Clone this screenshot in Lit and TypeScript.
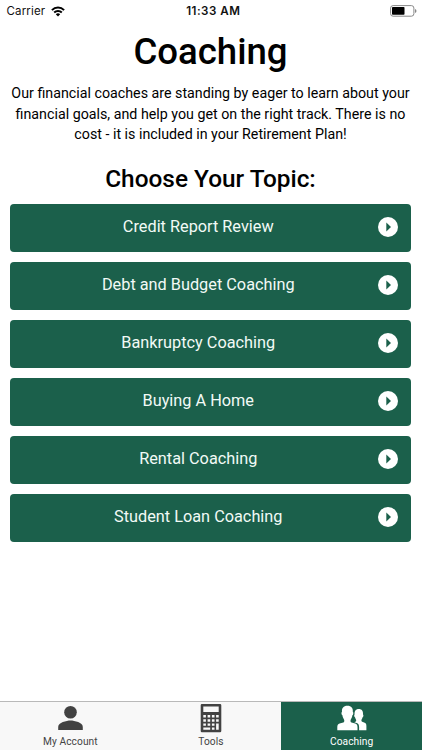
import { LitElement, html, css, svg } from "lit";
import { customElement, property } from "lit/decorators.js";
import { classMap } from "lit/directives/class-map.js";

const TOPICS = [
  "Credit Report Review",
  "Debt and Budget Coaching",
  "Bankruptcy Coaching",
  "Buying A Home",
  "Rental Coaching",
  "Student Loan Coaching",
];

const ICONS = {
  account: svg`<circle cx="15.500" cy="8.300" r="6.300"/><path d="M3.200 26v-3.100c0-4.200 8.200-6.300 12.300-6.300s12.300 2.100 12.300 6.300V26z"/>`,
  tools: svg`<path fill-rule="evenodd" d="M5.900 0h18.200q1.200 0 1.200 1.200v25.900q0 1.200-1.200 1.200H5.900q-1.200 0-1.200-1.200V1.200Q4.700 0 5.900 0zM7.300 2.500v5.500h15.400V2.500zM7.300 11v2.500h2.600V11zM11.600 11v2.500h2.600V11zM15.900 11v2.500h2.600V11zM20.100 11v2.500h2.600V11zM7.300 15.200v2.500h2.600v-2.500zM11.600 15.200v2.500h2.600v-2.500zM15.900 15.200v2.500h2.600v-2.500zM20.100 15.200v2.500h2.600v-2.500zM7.300 19.400v2.400h2.600v-2.400zM11.600 19.400v2.400h2.600v-2.400zM15.900 19.400v2.400h2.600v-2.400zM20.100 19.400v6.400h2.600v-6.400zM7.300 23.500v2.300h6.900v-2.300zM15.900 23.500v2.300h2.600v-2.300z"/>`,
  coaching: svg`<path d="M.3 26.200v-2.900c0-2.400.7-3.200 2.300-3.700l3.700-1.200c.8-.3 1-.8 1-1.700 0-.8-.3-1.300-.7-1.900-.7-1-1.100-2.200-1.200-3.500-1-.3-1.300-3-.4-3.500C4.700 4 6.400 1.700 10.400 1.700s5.700 2.300 5.400 6.100c.9.500.6 3.200-.4 3.500-.1 1.300-.5 2.500-1.200 3.500-.4.600-.7 1.100-.7 1.900 0 .9.200 1.400 1 1.700l3.700 1.200c1.600.5 2.300 1.300 2.300 3.700v2.900z"/><path d="M17.300 18.300l1.100-.5c.6-.3.800-.7.800-1.400 0-.9-.9-1.800-1.200-3.200-.8-.4-1.100-2.300-.4-2.800-.3-3.300 1.100-5.500 4.200-5.500s4.500 2.200 4.200 5.500c.7.500.4 2.400-.4 2.800-.3 1.400-1.200 2.300-1.200 3.200 0 .7.200 1.100.8 1.400l2.500 1c1.200.5 1.700 1.300 1.700 3.200v4.200h-7.300v-3c0-2.600-.9-3.500-2.500-4.100z"/>`,
};

@customElement("status-bar")
class StatusBar extends LitElement {
  static styles = css`
    :host { display: grid; grid-template-columns: 1fr auto 1fr; align-items: center; height: 22px; padding: 0 5px 0 6.500px; font: 11.500px/22px Inter, sans-serif; color: #111; }
    .left { display: flex; align-items: center; gap: 6px; letter-spacing: .15px; }
    .time { font-weight: 600; font-size: 11.600px; letter-spacing: .48px; padding-left: 3px; }
    .battery { justify-self: end; }
    svg { display: block; }
  `;
  render() {
    return html`
      <div class="left"><span>Carrier</span>
        <svg width="14" height="11" viewBox="0 0 14 11" fill="none" stroke="#000" stroke-width="2">
          <path d="M.9 4.100a8.700 8.700 0 0 1 12.200 0M3.200 6.500a5.400 5.400 0 0 1 7.600 0"/>
          <path d="M7 10.500 4.800 8.300a3.200 3.200 0 0 1 4.400 0z" fill="#000" stroke="none"/>
        </svg>
      </div>
      <div class="time">11:33 AM</div>
      <svg class="battery" width="27" height="12" viewBox="0 0 27 12">
        <rect x=".6" y=".6" width="23.300" height="10.600" rx="2.500" fill="#fff" stroke="#888"/>
        <rect x="2" y="2" width="12.500" height="7.800" rx=".8"/>
        <path d="M25 4v4q1.500-.6 1.500-2T25 4z" fill="#888"/>
      </svg>`;
  }
}

@customElement("topic-button")
class TopicButton extends LitElement {
  @property() label = "";
  static styles = css`
    :host { display: block; }
    .button { box-sizing: border-box; width: 100%; height: 47.500px; display: grid; grid-template-columns: 1fr 20px; align-items: center; padding: 0 13.500px 0 0; border: 0; border-radius: 4px; background: #1b604b; color: #f2faf6; font: 16.300px/20px Roboto, sans-serif; text-align: center; }
    .label { padding: 0 0 2px 9px; }
    svg { display: block; margin-bottom: 1px; }
  `;
  render() {
    return html`<button class="button"><span class="label">${this.label}</span>
      <svg width="20" height="20" viewBox="0 0 20 20"><circle cx="10" cy="10" r="10" fill="#fff"/><path d="M8.300 5.500v9L13 10z" fill="#1b604b"/></svg>
    </button>`;
  }
}

@customElement("tab-item")
class TabItem extends LitElement {
  @property() label = "";
  @property() icon: keyof typeof ICONS = "account";
  @property({ type: Boolean }) active = false;
  static styles = css`
    :host { display: block; }
    .tab { box-sizing: border-box; height: 100%; display: flex; flex-direction: column; align-items: center; padding-top: 2px; color: #444; fill: #424242; font: 10.200px/14px Roboto, sans-serif; }
    .active { background: #1b604b; color: #fff; fill: #fff; }
    .label { margin-top: 2px; letter-spacing: .08px; }
    svg { display: block; }
  `;
  render() {
    return html`<div class=${classMap({ tab: true, active: this.active })}>
      <svg width="30" height="29" viewBox="0 0 30 29">${ICONS[this.icon]}</svg>
      <span class="label">${this.label}</span></div>`;
  }
}

@customElement("app-root")
class AppRoot extends LitElement {
  static styles = css`
    :host { display: flex; flex-direction: column; height: 750px; background: #fff; color: #000; font-family: Roboto, sans-serif; text-align: center; }
    .content { flex: 1; padding: 0 11px 0 10px; }
    .title { margin: 8px 0 0; font-size: 36.600px; line-height: 44px; font-weight: 500; }
    .intro { margin: 9px -4px 0; font-size: 14.250px; line-height: 20.500px; }
    .subtitle { margin: 19px 0 0; font-size: 24.400px; line-height: 30px; font-weight: 500; }
    .topics { display: grid; gap: 10.500px; margin-top: 10.500px; }
    .tabs { display: grid; grid-template-columns: repeat(3, 1fr); height: 48px; border-top: 1.500px solid #b9b9b9; background: #f8f8f8; }
    .line { display: block; white-space: nowrap; }
  `;
  render() {
    return html`
      <status-bar></status-bar>
      <main class="content">
        <h1 class="title">Coaching</h1>
        <p class="intro">
          <span class="line">Our financial coaches are standing by eager to learn about your</span>
          <span class="line">financial goals, and help you get on the right track. There is no</span>
          <span class="line">cost - it is included in your Retirement Plan!</span>
        </p>
        <h2 class="subtitle">Choose Your Topic:</h2>
        <div class="topics">${TOPICS.map((t) => html`<topic-button .label=${t}></topic-button>`)}</div>
      </main>
      <nav class="tabs">
        <tab-item label="My Account" icon="account"></tab-item>
        <tab-item label="Tools" icon="tools"></tab-item>
        <tab-item label="Coaching" icon="coaching" active></tab-item>
      </nav>`;
  }
}
